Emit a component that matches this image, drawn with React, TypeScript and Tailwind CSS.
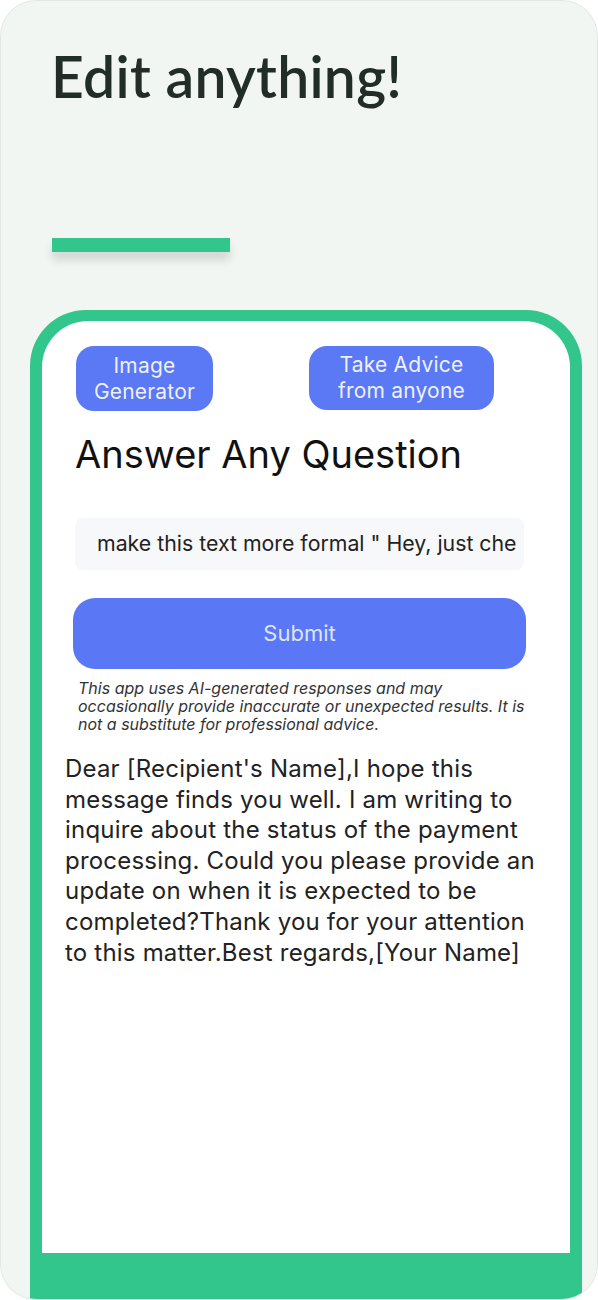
export default function App() {
  return (
    <div className="w-[598px] h-[1300px] bg-white">
      <div className="h-full rounded-[36px] overflow-hidden bg-[#f1f6f2] border border-[#e3e8e5] flex flex-col">
        <h1
          className="mt-[43px] ml-[50px] text-[57px] leading-[64px] font-semibold text-[#232d27] tracking-[0.3px]"
          style={{ fontFamily: "Lato, 'Noto Sans', sans-serif" }}
        >
          Edit anything!
        </h1>
        <div className="mt-[130px] ml-[51px] w-[178px] h-[14px] bg-[#33c68c] shadow-[0_8px_10px_rgba(0,0,0,0.13)]" />
        <div className="mt-[58px] ml-[29px] w-[552px] flex-1 bg-[#33c68c] rounded-t-[56px] pt-[11px] px-[12px] pb-[46px] flex flex-col">
          <div
            className="flex-1 bg-white rounded-t-[46px] pt-[25px] flex flex-col"
            style={{ fontFamily: "Inter, 'Liberation Sans', sans-serif" }}
          >
            <div className="flex items-start pl-[34px]">
              <button className="w-[137px] h-[65px] rounded-[18px] bg-[#5b78f5] text-[#eef0ff] text-[21px] leading-[26px] tracking-[0.2px]">
                Image
                <br />
                Generator
              </button>
              <button className="ml-[96px] w-[185px] h-[64px] rounded-[18px] bg-[#5b78f5] text-[#eef0ff] text-[21px] leading-[26px] tracking-[0.2px]">
                Take Advice
                <br />
                from anyone
              </button>
            </div>
            <h2 className="mt-[19px] ml-[33px] text-[38px] leading-[48px] text-[#111]">Answer Any Question</h2>
            <div className="mt-[40px] ml-[33px] w-[449px] h-[52px] rounded-[8px] bg-[#f7f8fa] flex items-center pl-[22px] overflow-hidden whitespace-nowrap">
              <span className="text-[21.3px] text-[#222]">make this text more formal " Hey, just che</span>
            </div>
            <button className="mt-[28px] ml-[31px] w-[453px] h-[71px] rounded-[22px] bg-[#5a77f5] text-[#dfe4fd] text-[22px]">
              Submit
            </button>
            <p className="mt-[10px] ml-[36px] w-[458px] text-[16px] leading-[18px] italic text-[#333]">
              This app uses AI-generated responses and may
              <br />
              occasionally provide inaccurate or unexpected results. It is not a substitute for professional advice.
            </p>
            <p className="mt-[21px] ml-[23px] w-[478px] text-[24px] leading-[30.6px] tracking-[0.2px] text-[#222]">
              Dear [Recipient's Name],I hope this message finds you well. I am writing to inquire about the status of
              the payment processing. Could you please provide an update on when it is expected to be completed?Thank
              you for your attention to this matter.Best regards,[Your Name]
            </p>
          </div>
        </div>
      </div>
    </div>
  );
}
